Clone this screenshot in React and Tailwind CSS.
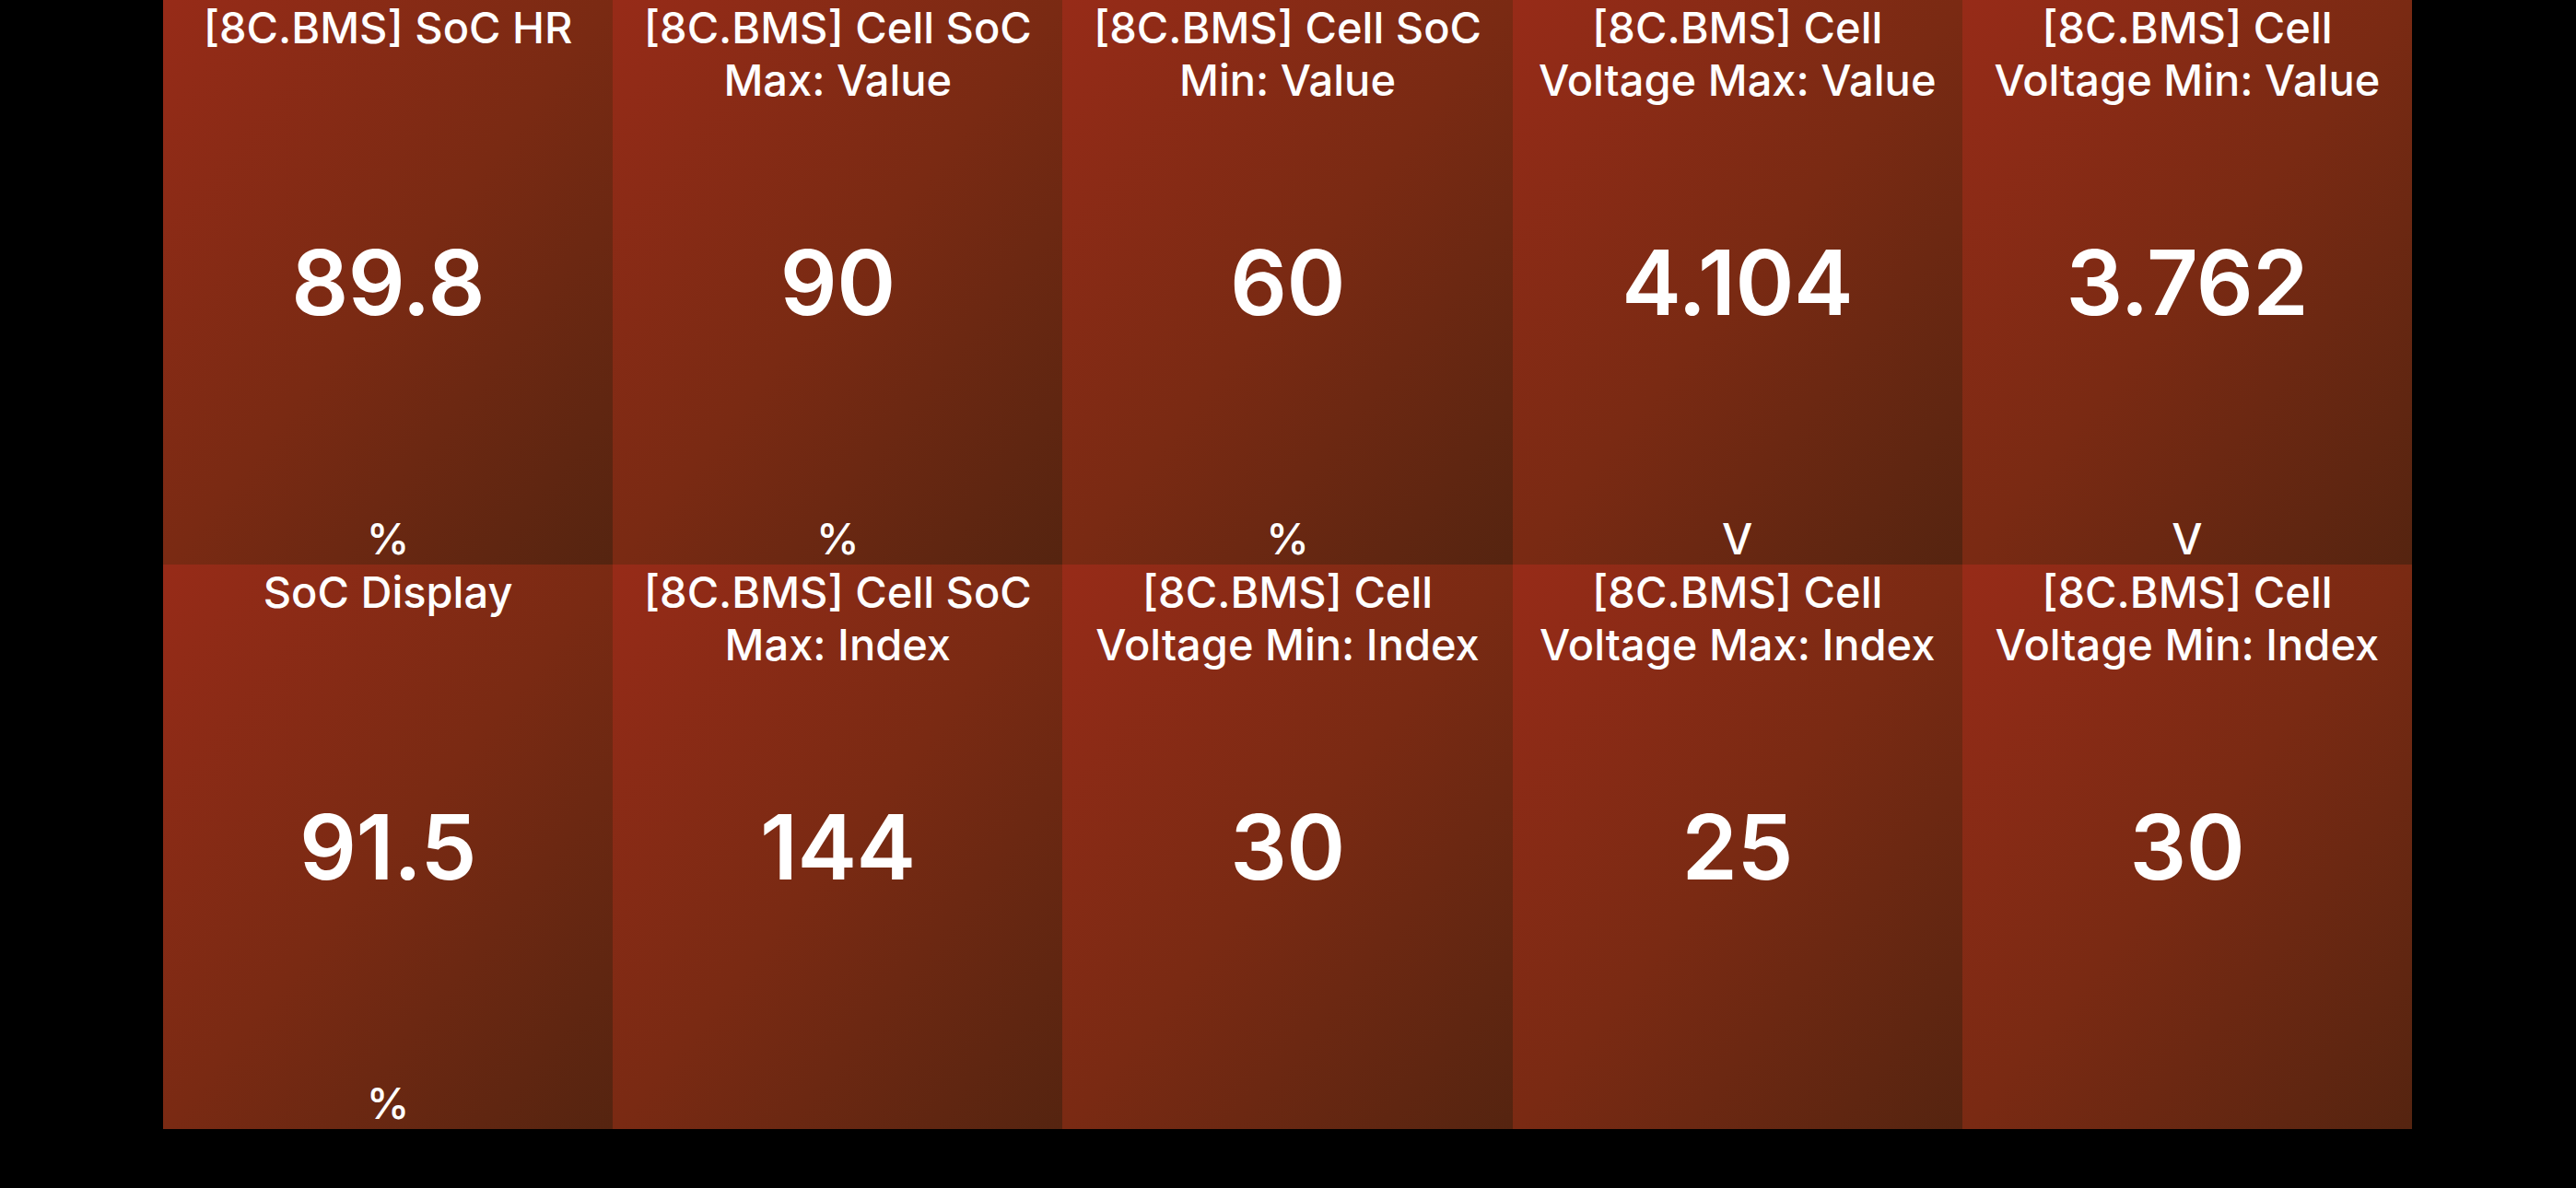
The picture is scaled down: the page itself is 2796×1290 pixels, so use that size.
const tiles = [
  { title: "[8C.BMS] SoC HR", value: "89.8", unit: "%" },
  { title: "[8C.BMS] Cell SoC Max: Value", value: "90", unit: "%" },
  { title: "[8C.BMS] Cell SoC Min: Value", value: "60", unit: "%" },
  { title: "[8C.BMS] Cell Voltage Max: Value", value: "4.104", unit: "V" },
  { title: "[8C.BMS] Cell Voltage Min: Value", value: "3.762", unit: "V" },
  { title: "SoC Display", value: "91.5", unit: "%" },
  { title: "[8C.BMS] Cell SoC Max: Index", value: "144", unit: "" },
  { title: "[8C.BMS] Cell Voltage Min: Index", value: "30", unit: "" },
  { title: "[8C.BMS] Cell Voltage Max: Index", value: "25", unit: "" },
  { title: "[8C.BMS] Cell Voltage Min: Index", value: "30", unit: "" },
];

const Tile = ({ title, value, unit }) => (
  <div className="grid h-full w-full bg-gradient-to-br from-[#972b18] via-[#7a2a13] to-[#552410] text-white">
    <p className="col-start-1 row-start-1 self-start px-2 pt-[1px] text-center text-[47px] font-medium leading-[57px]">
      {title}
    </p>
    <p className="col-start-1 row-start-1 self-center text-center text-[97px] font-semibold leading-none tracking-[-0.5px]">
      {value}
    </p>
    <p className="col-start-1 row-start-1 self-end text-center text-[47px] font-medium leading-[57px]">
      {unit}
    </p>
  </div>
);

const App = () => {
  return (
    <div className="h-[1290px] w-[2796px] overflow-hidden bg-black font-['Inter','Noto_Sans',sans-serif]">
      <div className="ml-[177px] grid h-[1226px] w-[2441px] grid-cols-5 grid-rows-2">
        {tiles.map((tile, i) => (
          <Tile key={i} {...tile} />
        ))}
      </div>
    </div>
  );
};

export default App;
